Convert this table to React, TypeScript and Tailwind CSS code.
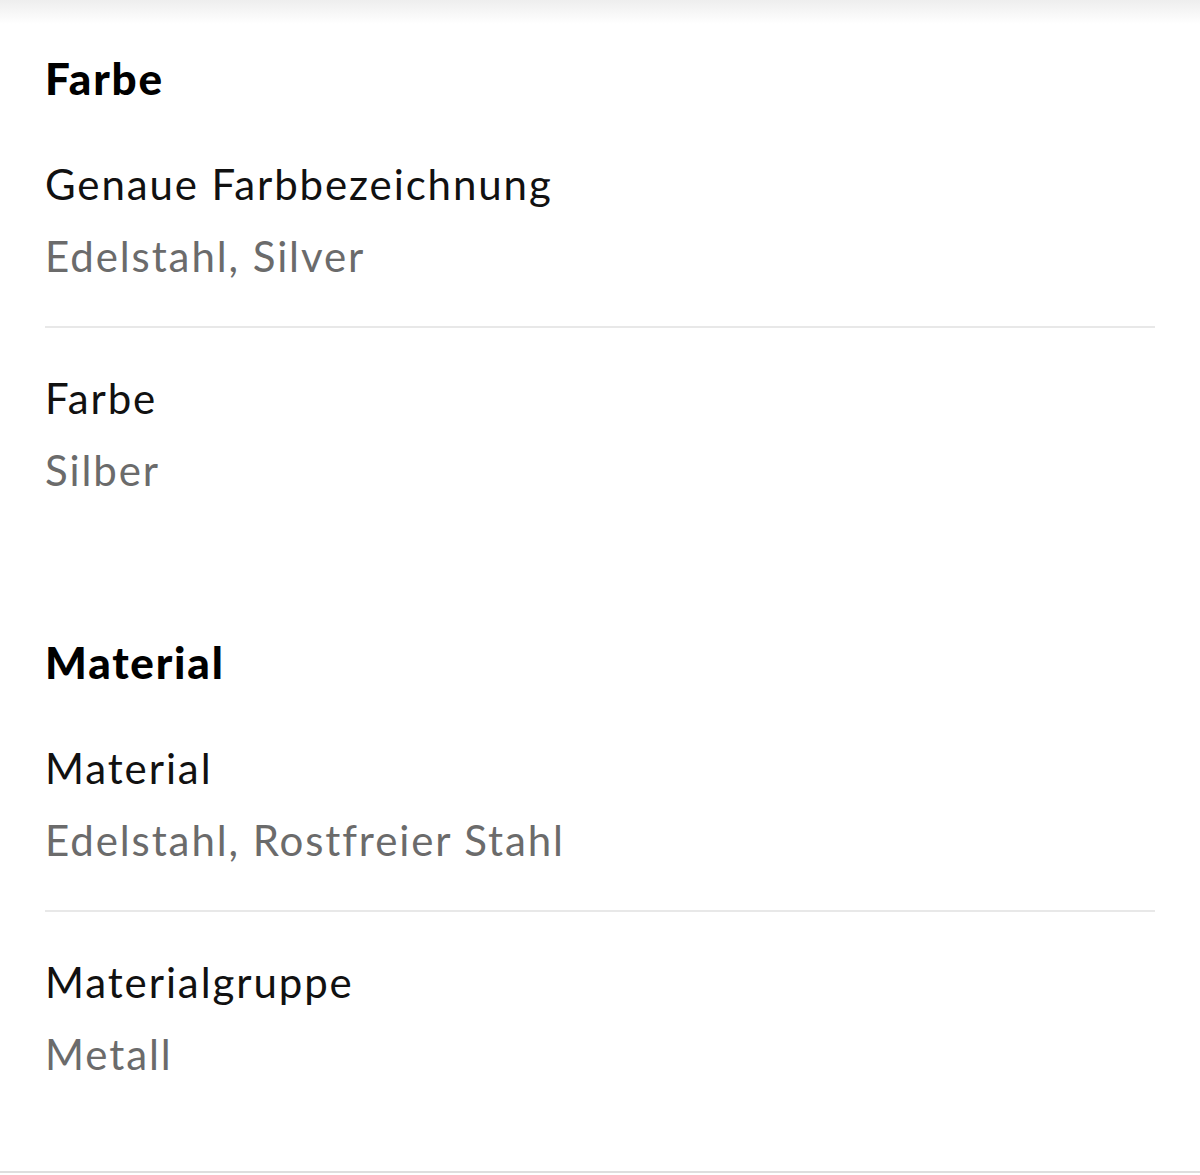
const SECTIONS = [
  {
    title: 'Farbe',
    rows: [
      { label: 'Genaue Farbbezeichnung', value: 'Edelstahl, Silver' },
      { label: 'Farbe', value: 'Silber' },
    ],
  },
  {
    title: 'Material',
    rows: [
      { label: 'Material', value: 'Edelstahl, Rostfreier Stahl' },
      { label: 'Materialgruppe', value: 'Metall' },
    ],
  },
]

function Row({ label, value, last }: { label: string; value: string; last: boolean }) {
  return (
    <div className={last ? 'py-[34px]' : 'py-[34px] border-b-2 border-[#e8e8e8]'}>
      <p className="text-[42px] leading-[72px] tracking-[1.9px] text-[#111]">{label}</p>
      <p className="text-[42px] leading-[72px] tracking-[1.9px] text-[#6b6b6b]">{value}</p>
    </div>
  )
}

export default function App() {
  return (
    <div className="bg-white font-['Lato','Noto_Sans',sans-serif] border-b-2 border-[#dedede]">
      {/* Schatten der Kopfzeile */}
      <div className="h-6 bg-linear-to-b from-[#eeeeee] to-white" />

      <div className="px-[45px] pt-[18px] pb-[47px] space-y-[86px]">
        {SECTIONS.map((s) => (
          <section key={s.title}>
            <h2 className="text-[44px] leading-[72px] font-black tracking-[1.8px] text-black">{s.title}</h2>
            {s.rows.map((r, i) => (
              <Row key={r.label} label={r.label} value={r.value} last={i === s.rows.length - 1} />
            ))}
          </section>
        ))}
      </div>
    </div>
  )
}
